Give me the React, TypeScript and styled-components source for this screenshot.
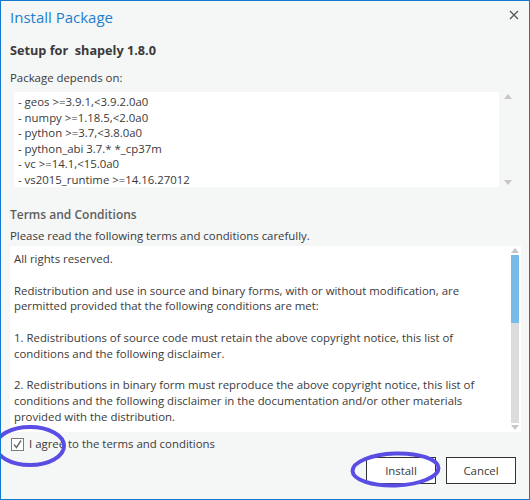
import React from "react";
import styled, { createGlobalStyle } from "styled-components";

const Global = createGlobalStyle`
  html, body { margin: 0; padding: 0; background: #f5f6f6; }
  * { box-sizing: border-box; }
`;

const FONT = `"Open Sans", "Noto Sans", sans-serif`;

const Window = styled.div`
  position: relative;
  width: 530px;
  height: 500px;
  border: 1px solid #1379d0;
  background: #f5f6f6;
  font-family: ${FONT};
  color: #3a3a3a;
  display: flex;
  flex-direction: column;
  overflow: hidden;
`;

const TitleBar = styled.div`
  display: flex;
  align-items: center;
  justify-content: space-between;
  padding: 5px 10px 0 9px;
  height: 27px;
`;

const Title = styled.div`
  font-size: 15px;
  line-height: 22px;
  color: #1f7fcf;
`;

const CloseBtn = styled.div`
  width: 10px;
  height: 10px;
  margin-top: -4px;
  display: flex;
`;

const Body = styled.div`
  display: flex;
  flex-direction: column;
  padding: 0 13px 0 9px;
  flex: 1;
`;

const Heading = styled.div`
  font-size: 12.7px;
  font-weight: 700;
  line-height: 20px;
  margin-top: 12px;
  white-space: pre;
`;

const Label = styled.div<{ $top: number }>`
  font-size: 11.4px;
  line-height: 16px;
  margin-top: ${(p) => p.$top}px;
`;

const SubHeading = styled.div`
  font-size: 12px;
  font-weight: 600;
  color: #5e5e5e;
  line-height: 18px;
  margin-top: 19px;
`;

const DepsFrame = styled.div`
  display: flex;
  height: 95px;
  margin-top: 6px;
  margin-left: 4px;
`;

const DepsList = styled.div`
  flex: 1;
  background: #fff;
  padding: 2px 4px;
  font-size: 11.4px;
  line-height: 15.5px;
`;

const ScrollCol = styled.div<{ $white?: boolean }>`
  width: ${(p) => (p.$white ? 12 : 17)}px;
  display: flex;
  flex-direction: column;
  align-items: center;
  justify-content: space-between;
  padding: 2px 0 2px;
  background: ${(p) => (p.$white ? "#fff" : "transparent")};
`;

const Track = styled.div`
  flex: 1;
  width: 8px;
  margin: 2px 0;
  display: flex;
  flex-direction: column;
  background: #dcdcdc;
`;

const Thumb = styled.div`
  height: 68px;
  background: #79bbe8;
`;

const Arrow = styled.div<{ $down?: boolean }>`
  width: 0;
  height: 0;
  border-left: 4px solid transparent;
  border-right: 4px solid transparent;
  ${(p) =>
    p.$down
      ? "border-top: 5px solid #c6c6c6;"
      : "border-bottom: 5px solid #c6c6c6;"}
`;

const TermsFrame = styled.div`
  display: flex;
  height: 186px;
  margin-top: 2px;
  margin-right: -5px;
  background: #fff;
`;

const TermsText = styled.div`
  flex: 1;
  padding: 5px 4px;
  font-size: 11.4px;
  line-height: 15.8px;
`;

const Para = styled.p`
  margin: 0 0 15.8px;
`;

const CheckRow = styled.label`
  display: flex;
  align-items: center;
  gap: 5px;
  margin-top: 4px;
  font-size: 11.4px;
  line-height: 16px;
  height: 16px;
  margin-left: 1px;
`;

const Box = styled.span`
  width: 13px;
  height: 13px;
  border: 1px solid #7a7a7a;
  background: #fff;
  display: flex;
  align-items: center;
  justify-content: center;
`;

const Buttons = styled.div`
  display: flex;
  justify-content: flex-end;
  gap: 10px;
  margin-top: 5px;
`;

const Button = styled.button`
  width: 70px;
  height: 27px;
  border: 1px solid #333;
  background: #fff;
  font-family: ${FONT};
  font-size: 11.4px;
  color: #3a3a3a;
  padding: 0;
`;

const Overlay = styled.svg`
  position: absolute;
  left: -1px;
  top: -1px;
  width: 530px;
  height: 500px;
  pointer-events: none;
`;

const deps = [
  "- geos >=3.9.1,<3.9.2.0a0",
  "- numpy >=1.18.5,<2.0a0",
  "- python >=3.7,<3.8.0a0",
  "- python_abi 3.7.* *_cp37m",
  "- vc >=14.1,<15.0a0",
  "- vs2015_runtime >=14.16.27012",
];

export default function App() {
  return (
    <>
      <Global />
      <Window>
        <TitleBar>
          <Title>Install Package</Title>
          <CloseBtn>
            <svg width="10" height="10" viewBox="0 0 10 10">
              <path d="M1 1L9 9M9 1L1 9" stroke="#555" strokeWidth="1.3" />
            </svg>
          </CloseBtn>
        </TitleBar>
        <Body>
          <Heading>{"Setup for  shapely 1.8.0"}</Heading>
          <Label $top={10}>Package depends on:</Label>
          <DepsFrame>
            <DepsList>
              {deps.map((d) => (
                <div key={d}>{d}</div>
              ))}
            </DepsList>
            <ScrollCol>
              <Arrow />
              <Arrow $down />
            </ScrollCol>
          </DepsFrame>
          <SubHeading>Terms and Conditions</SubHeading>
          <Label $top={4}>Please read the following terms and conditions carefully.</Label>
          <TermsFrame>
            <TermsText>
              <Para>All rights reserved.</Para>
              <Para>
                Redistribution and use in source and binary forms, with or without modification, are
                permitted provided that the following conditions are met:
              </Para>
              <Para>
                1. Redistributions of source code must retain the above copyright notice, this list of
                conditions and the following disclaimer.
              </Para>
              <Para>
                2. Redistributions in binary form must reproduce the above copyright notice, this list of
                conditions and the following disclaimer in the documentation and/or other materials
                provided with the distribution.
              </Para>
            </TermsText>
            <ScrollCol $white>
              <Arrow />
              <Track>
                <Thumb />
              </Track>
              <Arrow $down />
            </ScrollCol>
          </TermsFrame>
          <CheckRow>
            <Box>
              <svg width="11" height="11" viewBox="0 0 11 11">
                <path d="M2 5.5L4.5 8.5L9 1.5" fill="none" stroke="#6a6a6a" strokeWidth="1.4" />
              </svg>
            </Box>
            I agree to the terms and conditions
          </CheckRow>
          <Buttons>
            <Button>Install</Button>
            <Button>Cancel</Button>
          </Buttons>
        </Body>
        <Overlay viewBox="0 0 530 500">
          <ellipse cx="30" cy="446" rx="34" ry="19" fill="none" stroke="#5a4de3" strokeWidth="4" />
          <ellipse
            cx="395.5"
            cy="469.5"
            rx="43"
            ry="16"
            fill="none"
            stroke="#5a4de3"
            strokeWidth="4"
            transform="rotate(-2 395.5 469.5)"
          />
        </Overlay>
      </Window>
    </>
  );
}
